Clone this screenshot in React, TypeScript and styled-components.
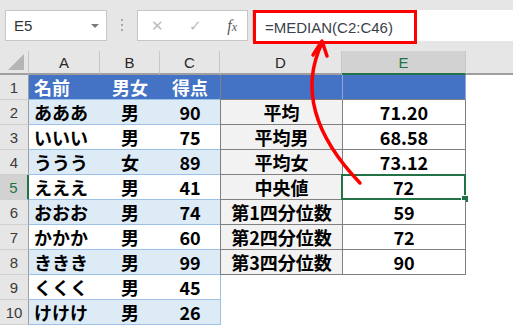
import React from 'react';
import styled, { createGlobalStyle, css } from 'styled-components';

const GlobalStyle = createGlobalStyle`
    body{
        margin: 0;
        background: #ffffff;
        overflow: hidden;
    }
`

type Tone = 'head' | 'band' | 'plain' | 'label' | 'value' | 'none';

interface Row {
    name: string;
    sex: string;
    score: string;
    label?: string;
    value?: string;
}

const rows: Row[] = [
    { name: '名前', sex: '男女', score: '得点', label: '', value: '' },
    { name: 'あああ', sex: '男', score: '90', label: '平均', value: '71.20' },
    { name: 'いいい', sex: '男', score: '75', label: '平均男', value: '68.58' },
    { name: 'ううう', sex: '女', score: '89', label: '平均女', value: '73.12' },
    { name: 'えええ', sex: '男', score: '41', label: '中央値', value: '72' },
    { name: 'おおお', sex: '男', score: '74', label: '第1四分位数', value: '59' },
    { name: 'かかか', sex: '男', score: '60', label: '第2四分位数', value: '72' },
    { name: 'ききき', sex: '男', score: '99', label: '第3四分位数', value: '90' },
    { name: 'くくく', sex: '男', score: '45' },
    { name: 'けけけ', sex: '男', score: '26' },
];

const columns = ['A', 'B', 'C', 'D', 'E'];
const activeRow = 5;

function App(){
    return(
        <Page>
            <GlobalStyle/>
            <FormulaBar>
                <NameBox>
                    <span>E5</span>
                    <DropArrow/>
                </NameBox>
                <Grip>
                    <Dot/><Dot/><Dot/>
                </Grip>
                <FxButtons>
                    <ButtonGlyph>✕</ButtonGlyph>
                    <ButtonGlyph>✓</ButtonGlyph>
                    <FxGlyph>f<small>x</small></FxGlyph>
                </FxButtons>
                <FormulaInput>
                    <Highlight>=MEDIAN(C2:C46)</Highlight>
                </FormulaInput>
            </FormulaBar>

            <Sheet>
                <Corner><CornerTriangle/></Corner>
                {columns.map((c) => (
                    <ColHeader key={c} selected={c === 'E'}>{c}</ColHeader>
                ))}
                <ColHeader selected={false} last/>

                {rows.map((r, i) => {
                    const n = i + 1;
                    const tone: Tone = n === 1 ? 'head' : n % 2 === 0 ? 'band' : 'plain';
                    const hasStats = r.label !== undefined;
                    return (
                        <React.Fragment key={n}>
                            <RowHeader selected={n === activeRow}>{n}</RowHeader>
                            <Cell tone={tone} align="left">{r.name}</Cell>
                            <Cell tone={tone}>{r.sex}</Cell>
                            <Cell tone={tone}>{r.score}</Cell>
                            {hasStats ? (
                                <>
                                    <StatCell tone={n === 1 ? 'head' : 'label'}>{r.label}</StatCell>
                                    <StatCell tone={n === 1 ? 'head' : 'value'} right active={n === activeRow}>
                                        {r.value}
                                        {n === activeRow && <FillHandle/>}
                                    </StatCell>
                                </>
                            ) : (
                                <>
                                    <EmptyCell edge/>
                                    <EmptyCell/>
                                </>
                            )}
                            <EmptyCell/>
                        </React.Fragment>
                    );
                })}
            </Sheet>

            <Arrow viewBox="0 0 513 326">
                <path d="M360 183 Q290 110 322 43" fill="none" stroke="#ff0000" strokeWidth="3.5" strokeLinecap="round"/>
                <polyline points="313,55 322,41 327,56" fill="none" stroke="#ff0000" strokeWidth="3.5" strokeLinecap="round" strokeLinejoin="round"/>
            </Arrow>
        </Page>
    )
}

const Page = styled.div`
    position: relative;
    width: 513px;
    height: 326px;
    overflow: hidden;
    background: #ffffff;
    font-family: "Liberation Sans", Arial, sans-serif;
`

const FormulaBar = styled.div`
    display: flex;
    align-items: flex-start;
    height: 51px;
    box-sizing: border-box;
    padding: 10px 0 0 5px;
    background: #e6e6e6;
`

const NameBox = styled.div`
    display: flex;
    align-items: center;
    justify-content: space-between;
    box-sizing: border-box;
    width: 102px;
    height: 31px;
    padding: 0 7px 0 8px;
    background: #ffffff;
    border: 1px solid #c6c6c6;
    color: #333333;
    font-size: 15px;
`

const DropArrow = styled.span`
    width: 0;
    height: 0;
    border-left: 4px solid transparent;
    border-right: 4px solid transparent;
    border-top: 4px solid #7a7a7a;
`

const Grip = styled.div`
    display: flex;
    flex-direction: column;
    align-items: center;
    gap: 3px;
    width: 30px;
    padding-top: 9px;
`

const Dot = styled.span`
    width: 2px;
    height: 2px;
    background: #a6a6a6;
`

const FxButtons = styled.div`
    display: flex;
    align-items: center;
    box-sizing: border-box;
    width: 111px;
    height: 31px;
    padding: 0 10px 0 13px;
    justify-content: space-between;
    background: #ffffff;
    border: 1px solid #c6c6c6;
`

const ButtonGlyph = styled.span`
    color: #bdbdbd;
    font-family: "DejaVu Sans", sans-serif;
    font-size: 15px;
    font-weight: 300;
`

const FxGlyph = styled.span`
    color: #5a5a5a;
    font-family: "Liberation Serif", serif;
    font-style: italic;
    font-size: 16px;
    small{
        font-size: 12px;
    }
`

const FormulaInput = styled.div`
    display: flex;
    flex: 1;
    height: 31px;
    margin-left: 4px;
    background: #ffffff;
    border-left: 1px solid #c6c6c6;
`

const Highlight = styled.div`
    display: flex;
    align-items: center;
    box-sizing: border-box;
    width: 164px;
    height: 34px;
    padding-left: 9px;
    border: 3px solid #ff0000;
    color: #3a3f4a;
    font-size: 15px;
    background: #ffffff;
`

const Sheet = styled.div`
    display: grid;
    grid-template-columns: 29px 71px 60px 60px 122px 124px 1fr;
    grid-template-rows: 24px repeat(10, 25px);
`

const headerBase = css`
    box-sizing: border-box;
    display: flex;
    align-items: center;
    justify-content: center;
    background: #e6e6e6;
    color: #262626;
    font-size: 15px;
`

const Corner = styled.div`
    ${headerBase};
    position: relative;
    border-right: 1px solid #c8c8c8;
    border-bottom: 2px solid #9e9e9e;
`

const CornerTriangle = styled.span`
    position: absolute;
    right: 4px;
    bottom: 3px;
    width: 0;
    height: 0;
    border-left: 16px solid transparent;
    border-bottom: 16px solid #b5b5b5;
`

const ColHeader = styled.div<{ selected: boolean; last?: boolean }>`
    ${headerBase};
    border-right: ${p => p.last ? 'none' : '1px solid #c8c8c8'};
    border-bottom: 2px solid ${p => p.selected ? '#217346' : '#9e9e9e'};
    ${p => p.selected && css`
        background: #d2d2d2;
        color: #217346;
    `}
`

const RowHeader = styled.div<{ selected: boolean }>`
    ${headerBase};
    color: #3a3a3a;
    border-bottom: 1px solid #d0d0d0;
    border-right: ${p => p.selected ? '2px solid #217346' : '1px solid #9e9e9e'};
    ${p => p.selected && css`
        background: #d2d2d2;
        color: #217346;
    `}
`

const toneStyles: Record<Tone, ReturnType<typeof css>> = {
    head: css`background: #4472c4; color: #ffffff;`,
    band: css`background: #ddebf7; color: #000000;`,
    plain: css`background: #ffffff; color: #000000;`,
    label: css`background: #f2f2f2; color: #000000;`,
    value: css`background: #ffffff; color: #000000;`,
    none: css`background: #ffffff;`,
};

const cellText = css`
    box-sizing: border-box;
    display: flex;
    align-items: center;
    font-family: "Noto Sans CJK JP", "Noto Sans", sans-serif;
    font-weight: 700;
    font-size: 18px;
    white-space: nowrap;
`

const Cell = styled.div<{ tone: Tone; align?: 'left' }>`
    ${cellText};
    ${p => toneStyles[p.tone]};
    justify-content: ${p => p.align === 'left' ? 'flex-start' : 'center'};
    padding-left: ${p => p.align === 'left' ? '5px' : '0'};
    border-bottom: 1px solid #9bc2e6;
`

const StatCell = styled.div<{ tone: Tone; right?: boolean; active?: boolean }>`
    ${cellText};
    ${p => toneStyles[p.tone]};
    position: relative;
    justify-content: center;
    border-left: 1px solid #808080;
    border-bottom: 1px solid #808080;
    border-right: ${p => p.right ? '1px solid #808080' : 'none'};
    ${p => p.tone === 'head' && p.right && css`border-left-color: #8eaadb; border-right-color: #8eaadb;`}
    ${p => p.active && css`
        border: 2px solid #217346;
        margin: -1px 0 0 -1px;
    `}
`

const FillHandle = styled.span`
    position: absolute;
    right: -5px;
    bottom: -5px;
    width: 6px;
    height: 6px;
    background: #217346;
    border: 1px solid #ffffff;
`

const EmptyCell = styled.div<{ edge?: boolean }>`
    background: #ffffff;
    border-left: ${p => p.edge ? '1px solid #9bc2e6' : 'none'};
`

const Arrow = styled.svg`
    position: absolute;
    top: 0;
    left: 0;
    width: 513px;
    height: 326px;
    pointer-events: none;
`

export default App;
